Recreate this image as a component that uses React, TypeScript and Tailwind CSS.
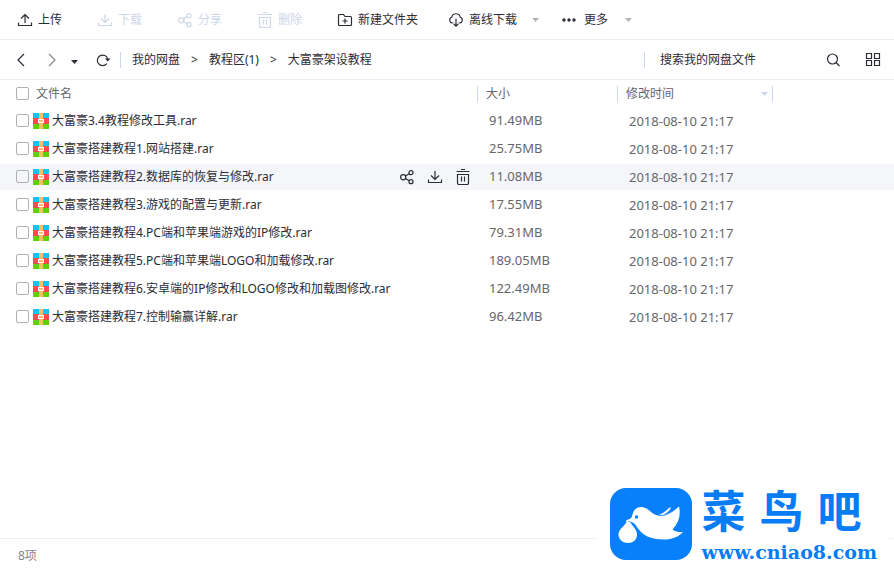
import type { ReactNode } from 'react';

const files = [
  { name: '大富豪3.4教程修改工具.rar', size: '91.49MB', date: '2018-08-10 21:17' },
  { name: '大富豪搭建教程1.网站搭建.rar', size: '25.75MB', date: '2018-08-10 21:17' },
  { name: '大富豪搭建教程2.数据库的恢复与修改.rar', size: '11.08MB', date: '2018-08-10 21:17', active: true },
  { name: '大富豪搭建教程3.游戏的配置与更新.rar', size: '17.55MB', date: '2018-08-10 21:17' },
  { name: '大富豪搭建教程4.PC端和苹果端游戏的IP修改.rar', size: '79.31MB', date: '2018-08-10 21:17' },
  { name: '大富豪搭建教程5.PC端和苹果端LOGO和加载修改.rar', size: '189.05MB', date: '2018-08-10 21:17' },
  { name: '大富豪搭建教程6.安卓端的IP修改和LOGO修改和加载图修改.rar', size: '122.49MB', date: '2018-08-10 21:17' },
  { name: '大富豪搭建教程7.控制输赢详解.rar', size: '96.42MB', date: '2018-08-10 21:17' },
];

const checkbox =
  'mb-px block size-[13px] shrink-0 appearance-none rounded-[2px] border border-[#b0b0b4] checked:bg-blue-500';

function Icon({ children }: { children: ReactNode }) {
  return (
    <svg
      className="size-4 shrink-0"
      viewBox="0 0 16 16"
      fill="none"
      stroke="currentColor"
      strokeWidth="1.2"
      aria-hidden="true"
    >
      {children}
    </svg>
  );
}

function UploadIcon() {
  return (
    <Icon>
      <path d="M1.5 10.5v3h13v-3M8 11V2.5M4 6.5l4-4 4 4" />
    </Icon>
  );
}

function DownloadIcon() {
  return (
    <Icon>
      <path d="M1.5 10.5v3h13v-3M8 2v8.5M4 6.5l4 4 4-4" />
    </Icon>
  );
}

function ShareIcon() {
  return (
    <Icon>
      <circle cx="4.2" cy="8.2" r="2.6" />
      <circle cx="12" cy="3.7" r="2" />
      <circle cx="12" cy="12.7" r="2" />
      <path d="M6.5 7l3.7-2.2M6.5 9.5l3.7 2.2" />
    </Icon>
  );
}

function TrashIcon() {
  return (
    <Icon>
      <path d="M6 .5h4M1.5 2.500h13M2.500 5.500h11v8.500q0 1.500-1.500 1.500H4q-1.500 0-1.500-1.500zM6.500 7.500v5M9.500 7.500v5" />
    </Icon>
  );
}

function NewFolderIcon() {
  return (
    <Icon>
      <path d="M2.500 2.500h4l1.500 2h5.500q1 0 1 1v7q0 1-1 1h-11q-1 0-1-1v-9q0-1 1-1zM8 6.500v5M5.500 9h5" />
    </Icon>
  );
}

function CloudIcon() {
  return (
    <Icon>
      <path d="M5.500 11H4.300a3 3 0 0 1-.6-5.800 4.400 4.400 0 0 1 8.600 0 3 3 0 0 1-.6 5.800H10.500M8 6.500v7.500M5.800 12l2.200 2.200 2.200-2.200" />
    </Icon>
  );
}

function DotsIcon() {
  return (
    <Icon>
      <g fill="currentColor" stroke="none">
        <circle cx="3" cy="8" r="1.700" />
        <circle cx="8" cy="8" r="1.700" />
        <circle cx="13" cy="8" r="1.700" />
      </g>
    </Icon>
  );
}

function Caret() {
  return (
    <svg className="w-[7px] shrink-0" viewBox="0 0 7 4" fill="currentColor" aria-hidden="true">
      <path d="M0 0h7L3.500 4z" />
    </svg>
  );
}

function RarIcon() {
  return (
    <svg className="size-4 shrink-0" viewBox="0 0 16 16" shapeRendering="crispEdges" aria-hidden="true">
      <path fill="#0cc5fb" d="M0 0h16v5H0z" />
      <path fill="#fe4a57" d="M0 5h16v6H0z" />
      <path fill="#5bd20a" d="M0 11h16v5H0z" />
      <path fill="#fdbb6b" d="M6 0h4v16H6z" />
      <path fill="#fff" d="M5 6h6v4H5z" />
      <path fill="#fdbb6b" d="M6 7h4v2H6z" />
    </svg>
  );
}

function Toolbar() {
  const button = 'flex items-center gap-[5px]';
  return (
    <header className="flex h-10 items-center border-b border-[#ececee] pl-[17px]">
      <div className="flex items-center gap-[35px]">
        <button className={button}><UploadIcon />上传</button>
        <button className={`${button} text-[#cdd6ea]`} disabled><DownloadIcon />下载</button>
        <button className={`${button} text-[#cdd6ea]`} disabled><ShareIcon />分享</button>
        <button className={`${button} text-[#cdd6ea]`} disabled><TrashIcon />删除</button>
        <button className={button}><NewFolderIcon />新建文件夹</button>
      </div>
      <button className={`${button} ml-[30px]`}>
        <CloudIcon />离线下载
        <span className="ml-[10px] text-[#b4b4b8]"><Caret /></span>
      </button>
      <button className={`${button} ml-[22px]`}>
        <DotsIcon /><span className="ml-[2px]">更多</span>
        <span className="ml-3 text-[#b4b4b8]"><Caret /></span>
      </button>
    </header>
  );
}

function AddressBar() {
  return (
    <div className="flex h-10 items-center border-b border-[#ececee] pr-[13px] pl-[13px]">
      <button aria-label="后退">
        <Icon><path d="M11 2L5 8l6 6" /></Icon>
      </button>
      <button aria-label="前进" className="ml-[15px] text-[#85858a]">
        <Icon><path d="M5 2l6 6-6 6" /></Icon>
      </button>
      <button aria-label="历史" className="mt-1 ml-[11px]"><Caret /></button>
      <button aria-label="刷新" className="ml-[17px]">
        <Icon>
          <path d="M11.800 11.700A5.300 5.300 0 1 1 12.800 7" />
          <path d="M9.800 6.500h5.500L12.800 9.500z" fill="currentColor" stroke="none" />
        </Icon>
      </button>
      <nav className="ml-[9px] flex h-4 items-center gap-[11px] border-l border-[#ccd6ec] pl-[11px]">
        <a href="#">我的网盘</a>
        <span>&gt;</span>
        <a href="#">教程区(1)</a>
        <span>&gt;</span>
        <a href="#">大富豪架设教程</a>
      </nav>
      <form className="ml-auto flex h-4 w-[237px] items-center border-l border-[#ccd6ec] pl-[15px]">
        <input
          type="text"
          aria-label="搜索"
          placeholder="搜索我的网盘文件"
          className="min-w-0 flex-1 outline-none placeholder:text-[#2c2c36]"
        />
        <button type="button" aria-label="搜索文件" className="ml-2">
          <Icon><circle cx="7.500" cy="7" r="5" /><path d="M11 10.500l3.500 3.500" /></Icon>
        </button>
        <button type="button" aria-label="切换视图" className="ml-6">
          <Icon><path d="M1.500 1.500h5v5h-5zM9.500 1.500h5v5h-5zM1.500 8.500h5v5h-5zM9.500 8.500h5v5h-5z" /></Icon>
        </button>
      </form>
    </div>
  );
}

function FileTable() {
  return (
    <table className="w-full table-fixed border-separate border-spacing-x-0 border-spacing-y-[2px] text-left">
      <thead className="text-[#66666c]">
        <tr className="h-6">
          <th className="w-[477px] p-0 pl-4 font-normal">
            <label className="flex items-center gap-[7px]">
              <input type="checkbox" className={checkbox} />
              文件名
            </label>
          </th>
          <th className="w-[140px] p-0 font-normal">
            <div className="flex h-4 items-center border-l border-[#ccd6ec] pl-2">大小</div>
          </th>
          <th className="w-[156px] p-0 font-normal">
            <div className="flex h-4 items-center justify-between border-x border-[#ccd6ec] pr-1 pl-2">
              修改时间
              <span className="text-[#ccd6ec]"><Caret /></span>
            </div>
          </th>
          <th className="p-0" />
        </tr>
      </thead>
      <tbody>
        {files.map((file) => (
          <tr key={file.name} className={file.active ? 'h-[26px] bg-[#f5f6fa]' : 'h-[26px]'}>
            <td className="p-0 pr-[6px] pl-4">
              <div className="flex items-center">
                <label className="flex items-center">
                  <input type="checkbox" className={checkbox} />
                  <span className="ml-1"><RarIcon /></span>
                  <span className="ml-[3px] whitespace-nowrap">{file.name}</span>
                </label>
                {file.active && (
                  <span className="ml-auto flex gap-3">
                    <button aria-label="分享"><ShareIcon /></button>
                    <button aria-label="下载"><DownloadIcon /></button>
                    <button aria-label="删除"><TrashIcon /></button>
                  </span>
                )}
              </div>
            </td>
            <td className="p-0 pl-3 text-[13px] text-[#66666c]">{file.size}</td>
            <td className="p-0 pt-[2px] pl-3 text-[13px] text-[#66666c]">{file.date}</td>
            <td className="p-0" />
          </tr>
        ))}
      </tbody>
    </table>
  );
}

function Watermark() {
  return (
    <div className="absolute right-[5px] bottom-[9px] flex items-end gap-2 bg-white pr-3 pl-[11px] text-[#087cf5]">
      <svg className="mb-[2px] w-[84px]" viewBox="0 0 84 74" aria-hidden="true">
        <rect x="1" y="1" width="82" height="72" rx="16" fill="#087ffb" />
        <path
          fill="#fff"
          d="M16.500 33.500c3-1 5.500-1.500 6.500-4 1-6 4-9.500 9-9.500 6 0 8 4 12 6.500 4 2.500 8 2.500 12 1 6-1.500 10-5 14-8 2 8 0 16-6.500 23 3 2.500 6.500 2.800 10.500 2.500-4 4.500-10 7-17 7.500-13 .5-24-3-30-14-2-3-5-4-10.500-5z"
        />
        <path d="M49 27.500c6 0 9-6 13-7.500-1 4-4 6-8 8z" fill="#fff" />
        <path d="M50 28.500c6 1 13-3 18-8" fill="none" stroke="#087ffb" strokeWidth=".8" />
        <path fill="#fff" d="M17.500 34c2.500 0 4 1 5 3 2 3 5.500 6 5.500 10.500 0 5-4 8.500-9 8.500s-9.500-3.500-9.500-8.500c0-6 7-8 8-13.500z" />
        <circle cx="27.500" cy="30" r="1.700" fill="#087ffb" />
      </svg>
      <div>
        <div className="flex gap-[14px] font-[Noto_Sans_CJK_SC,sans-serif] text-[44px] leading-[64px] font-bold">
          <span>菜</span>
          <span>鸟</span>
          <span>吧</span>
        </div>
        <div className="font-[DejaVu_Serif,serif] text-[19px] leading-[22px] font-bold">www.cniao8.com</div>
      </div>
    </div>
  );
}

export default function App() {
  return (
    <div className="relative flex min-h-screen flex-col bg-white font-['Noto_Sans','Noto_Sans_CJK_SC',sans-serif] text-xs text-[#2c2c36]">
      <Toolbar />
      <AddressBar />
      <main className="flex-1">
        <FileTable />
      </main>
      <footer className="flex h-[34px] items-center border-t border-[#f0f0f2] pl-[18px] text-[#85858a]">
        8项
      </footer>
      <Watermark />
    </div>
  );
}
